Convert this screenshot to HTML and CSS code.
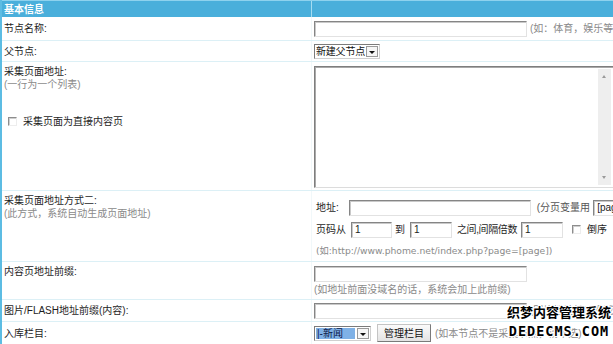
FILE: index.html
```html
<!DOCTYPE html>
<html lang="zh-CN">
<head>
<meta charset="utf-8">
<title>基本信息</title>
<link rel="stylesheet" href="styles.css">
</head>
<body>
<div class="panel">
  <div class="row head">
    <div class="cl">基本信息</div>
    <div class="cr"></div>
  </div>

  <div class="row r1">
    <div class="cl">节点名称:</div>
    <div class="cr"><span class="txt w213"></span><span class="hint ml3">(如：体育，娱乐等，可以包含中文)</span></div>
  </div>

  <div class="row r2">
    <div class="cl">父节点:</div>
    <div class="cr"><span class="sel w66"><span class="val">新建父节点</span><span class="arr"></span></span></div>
  </div>

  <div class="row r3">
    <div class="cl top">
      <div>采集页面地址:</div>
      <div class="hint">(一行为一个列表)</div>
      <div class="cbline"><span class="cb"></span><span>采集页面为直接内容页</span></div>
    </div>
    <div class="cr top">
      <div class="ta"><div class="ta-body"></div><div class="sb"><span class="up"></span><span class="down"></span></div></div>
    </div>
  </div>

  <div class="row r4">
    <div class="cl top">
      <div>采集页面地址方式二:</div>
      <div class="hint">(此方式，系统自动生成页面地址)</div>
    </div>
    <div class="cr top sub">
      <div class="line">
        <span>地址:</span><span class="txt w182 ml10"></span><span class="hint dark ml6">(分页变量用</span><span class="txt w60 ml3 val-in">[page]</span>
      </div>
      <div class="line l2">
        <span>页码从</span><span class="txt w41 ml5 val-in">1</span><span class="ml3">到</span><span class="txt w42 ml5 val-in">1</span><span class="ml5 tight">之间,间隔倍数</span><span class="txt w42 ml4 val-in">1</span><span class="cb ml9"></span><span class="ml6">倒序</span>
      </div>
      <div class="hint url">(如:http://www.phome.net/index.php?page=[page])</div>
    </div>
  </div>

  <div class="row r5">
    <div class="cl top">内容页地址前缀:</div>
    <div class="cr top">
      <span class="txt w213"></span>
      <div class="hint">(如地址前面没域名的话，系统会加上此前缀)</div>
    </div>
  </div>

  <div class="row r6">
    <div class="cl">图片/FLASH地址前缀(内容):</div>
    <div class="cr"><span class="txt w213"></span><span class="hint ml3">(图片地址前面没域名的话，系统会加上此前缀)</span></div>
  </div>

  <div class="row r7">
    <div class="cl">入库栏目:</div>
    <div class="cr"><span class="sel w57"><span class="val on">|-新闻</span><span class="arr"></span></span><span class="btn ml6">管理栏目</span><span class="hint ml4">(如本节点不是采集节点，请不选)</span></div>
  </div>

  <div class="wm">
    <div class="wm1">织梦内容管理系统</div>
    <div class="wm2">DEDECMS.COM</div>
  </div>
</div>
</body>
</html>
```
FILE: styles.css
```css
html, body {
  margin: 0;
  padding: 0;
  background: #fff;
  overflow: hidden;
}
body {
  font-family: "Liberation Sans", "Noto Sans CJK SC", sans-serif;
  font-size: 10px;
  line-height: 13px;
  color: #1e1e1e;
  width: 613px;
  height: 344px;
}
.panel {
  position: relative;
  border-left: 2px solid #5cbce3;
  height: 344px;
  box-sizing: border-box;
  overflow: hidden;
}
.row {
  display: grid;
  grid-template-columns: 310px 1fr;
  border-bottom: 1px solid #dcf0f6;
  overflow: hidden;
  white-space: nowrap;
}
.cl {
  padding-left: 2px;
  display: flex;
  align-items: center;
  border-right: 1px solid #f1f8fa;
}
.cr {
  padding-left: 2px;
  display: flex;
  align-items: center;
  min-width: 0;
  overflow: hidden;
}
.cl.top, .cr.top {
  flex-direction: column;
  align-items: flex-start;
  justify-content: flex-start;
}
.cl.top { padding-top: 3px; }

.head {
  height: 16px;
  background: #4aafdb;
  border-top: 1px solid #8ed2ee;
  border-bottom: 0;
  color: #fff;
  font-weight: bold;
}
.head .cl { border-right: 1px solid #a5dcf1; }

.r1 { height: 23px; }
.r2 { height: 20px; }
.r3 { height: 128px; }
.r4 { height: 70px; }
.r5 { height: 37px; }
.r6 { height: 21px; }
.r7 { height: 22px; border-bottom: 0; }

.hint { color: #8a8a8a; }
.hint.dark { color: #555; }
.tight { letter-spacing: -0.4px; }

.ml1 { margin-left: 1px; }
.ml2 { margin-left: 2px; }
.ml3 { margin-left: 3px; }
.ml4 { margin-left: 4px; }
.ml5 { margin-left: 5px; }
.ml6 { margin-left: 6px; }
.ml7 { margin-left: 7px; }
.ml9 { margin-left: 9px; }
.ml10 { margin-left: 10px; }

.txt {
  display: inline-block;
  box-sizing: border-box;
  height: 16px;
  background: #fff;
  border: 1px solid;
  border-color: #858585 #e2e2e2 #e2e2e2 #858585;
  box-shadow: inset 1px 1px 0 #c9c9c9;
  flex: none;
}
.val-in {
  padding-left: 3px;
  line-height: 13px;
  color: #222;
  overflow: hidden;
}
.w213 { width: 213px; }
.w182 { width: 182px; }
.w60 { width: 60px; }
.w41 { width: 41px; }
.w42 { width: 42px; }
.w66 { width: 66px; }
.w57 { width: 57px; }

.sel {
  display: inline-flex;
  box-sizing: border-box;
  height: 15px;
  border: 1px solid;
  border-color: #7b7b7b #d0d0d0 #d0d0d0 #7b7b7b;
  background: #fff;
  flex: none;
  padding: 1px;
}
.sel .val {
  flex: 1;
  line-height: 11px;
  padding-left: 0;
  color: #111;
  overflow: hidden;
  letter-spacing: -0.2px;
}
.sel .val.on {
  background: #7fb1e6;
  color: #10204a;
  margin-right: 2px;
  padding-left: 1px;
  letter-spacing: 0;
}
.sel .arr {
  width: 12px;
  box-sizing: border-box;
  border: 1px solid #9a9a9a;
  background: #f6f6f6;
  position: relative;
  flex: none;
}
.sel .arr::after {
  content: "";
  position: absolute;
  left: 2px;
  top: 4px;
  border-left: 3px solid transparent;
  border-right: 3px solid transparent;
  border-top: 3px solid #111;
}

.r3 .cr { padding-top: 4px; }
.ta {
  display: flex;
  box-sizing: border-box;
  width: 300px;
  height: 122px;
  border: 1px solid;
  border-color: #7e7e7e #dcdcdc #dcdcdc #7e7e7e;
  box-shadow: inset 1px 1px 0 #a9a9a9;
  background: #fff;
}
.ta-body { flex: 1; }
.sb {
  width: 13px;
  margin: 2px 2px 2px 0;
  background: #eeeeee;
  position: relative;
}
.sb .up, .sb .down {
  position: absolute;
  left: 4px;
  border-left: 2.5px solid transparent;
  border-right: 2.5px solid transparent;
}
.sb .up { top: 6px; border-bottom: 3px solid #9a9a9a; }
.sb .down { bottom: 6px; border-top: 3px solid #9a9a9a; }

.cbline {
  display: flex;
  align-items: center;
  margin-top: 24px;
  padding-left: 4px;
}
.cb {
  display: inline-block;
  box-sizing: border-box;
  width: 9px;
  height: 9px;
  border: 1px solid;
  border-color: #8d8d8d #ededed #ededed #8d8d8d;
  box-shadow: inset 1px 1px 0 #cfcfcf;
  background: #fff;
  flex: none;
}
.cbline .cb { margin-right: 6px; }

.sub { padding-left: 4px; padding-top: 8px; }
.line {
  display: flex;
  align-items: center;
  height: 17px;
}
.line.l2 { margin-top: 5px; }
.hint.url {
  margin-top: 6px;
  font-family: "DejaVu Sans", "Noto Sans CJK SC", sans-serif;
  font-size: 9.2px;
}

.r5 .cr { padding-top: 4px; }
.r5 .hint { margin-top: 1px; }

.btn {
  display: inline-flex;
  align-items: center;
  justify-content: center;
  box-sizing: border-box;
  height: 18px;
  width: 54px;
  border: 1px solid;
  border-color: #c4c4c4 #7a7a7a #7a7a7a #c4c4c4;
  background: linear-gradient(#fbfbfb, #e3e3e3);
  color: #111;
  flex: none;
}

.wm {
  position: absolute;
  right: 2px;
  bottom: 4px;
  text-align: center;
  color: #000;
  font-weight: bold;
  text-shadow: -1px -1px 0 #fff, 1px -1px 0 #fff, -1px 1px 0 #fff, 1px 1px 0 #fff, 0 1px 0 #fff, 0 -1px 0 #fff, 1px 0 0 #fff, -1px 0 0 #fff;
}
.wm1 {
  font-family: "Noto Sans CJK SC", sans-serif;
  font-size: 13px;
  line-height: 20px;
}
.wm2 {
  font-family: "DejaVu Sans Mono", monospace;
  font-size: 13.5px;
  line-height: 18px;
  letter-spacing: 1px;
}
```
